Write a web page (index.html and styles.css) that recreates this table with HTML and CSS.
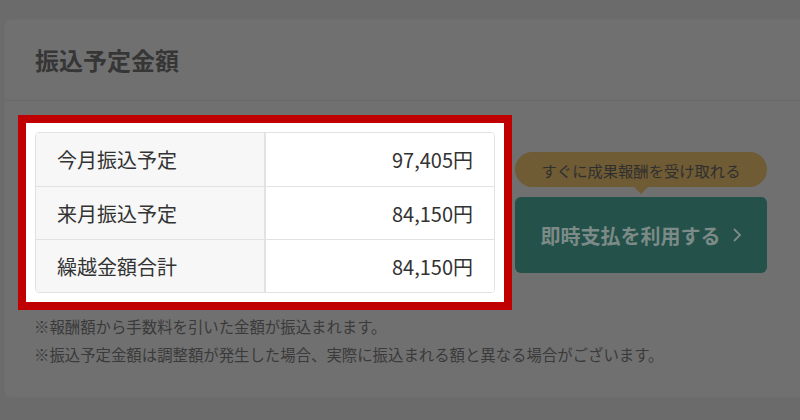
FILE: index.html
```html
<!DOCTYPE html>
<html lang="ja">
<head>
<meta charset="utf-8">
<link rel="stylesheet" href="styles.css">
</head>
<body>
<div class="card">
  <div class="card-head"><h2 class="title">振込予定金額</h2></div>
  <div class="card-body">
    <div class="row">
      <div class="highlight">
        <table class="amounts">
          <tr><th>今月振込予定</th><td>97,405円</td></tr>
          <tr><th>来月振込予定</th><td>84,150円</td></tr>
          <tr><th>繰越金額合計</th><td>84,150円</td></tr>
        </table>
      </div>
      <div class="action">
        <div class="bubble">すぐに成果報酬を受け取れる</div>
        <div class="btn">即時支払を利用する<svg class="chev" width="10" height="16" viewBox="0 0 10 16"><path d="M2 2 L8 8 L2 14" fill="none" stroke="currentColor" stroke-width="1.8"/></svg></div>
      </div>
    </div>
    <p class="note">※報酬額から手数料を引いた金額が振込まれます。</p>
    <p class="note">※振込予定金額は調整額が発生した場合、実際に振込まれる額と異なる場合がございます。</p>
  </div>
</div>
</body>
</html>
```
FILE: styles.css
```css
html, body { margin: 0; padding: 0; }
body {
  background: #6b6b6b;
  font-family: "Noto Sans CJK JP", "Noto Sans", sans-serif;
  width: 800px;
  height: 420px;
  overflow: hidden;
}
.card {
  margin: 19px 0 0 4px;
  width: 830px;
  height: 379px;
  background: #707070;
  border: 1px solid #6d6d6d;
  border-radius: 6px;
  box-sizing: border-box;
}
.card-head {
  height: 81px;
  border-bottom: 1px solid #686868;
  box-sizing: border-box;
  padding: 0 0 0 30px;
  display: flex;
  align-items: center;
}
.title {
  margin: 0;
  font-size: 24px;
  font-weight: 700;
  color: #363636;
  line-height: 1;
}
.card-body { padding: 14px 0 0 13px; }
.row { display: flex; align-items: center; }
.highlight {
  width: 494px;
  box-sizing: border-box;
  border: 8px solid #c00000;
  background: #fff;
  padding: 9px;
}
.amounts {
  width: 100%;
  border-collapse: separate;
  border-spacing: 0;
  border: 1px solid #e2e2e2;
  border-radius: 4px;
  overflow: hidden;
  font-size: 20px;
  color: #333;
}
.amounts th, .amounts td {
  height: 53px;
  padding: 0 21px;
  box-sizing: border-box;
  font-weight: 400;
  border-top: 1px solid #e2e2e2;
}
.amounts tr:first-child th, .amounts tr:first-child td { border-top: 0; height: 53px; }
.amounts th {
  width: 230px;
  text-align: left;
  background: #f7f7f7;
  border-right: 2px solid #e2e2e2;
}
.amounts td { text-align: right; background: #fff; }
.action {
  margin-left: 3px;
  width: 252px;
  display: flex;
  flex-direction: column;
}
.bubble {
  position: relative;
  height: 35px;
  border-radius: 18px;
  background: #6f5b34;
  color: #2f2f2f;
  font-size: 15.3px;
  display: flex;
  align-items: center;
  justify-content: center;
  margin-bottom: 10px;
}
.bubble::after {
  content: "";
  position: absolute;
  left: 50%;
  bottom: -7px;
  margin-left: -7px;
  border-left: 7px solid transparent;
  border-right: 7px solid transparent;
  border-top: 7px solid #6f5b34;
}
.btn {
  height: 76px;
  border-radius: 6px;
  background: #24514a;
  color: #7c8b87;
  font-size: 20px;
  font-weight: 700;
  display: flex;
  align-items: center;
  justify-content: center;
  gap: 11px;
}
.chev { display: block; }
.note {
  margin: 0;
  padding-left: 16px;
  font-size: 15.4px;
  line-height: 28px;
  color: #3a3a3a;
}
.note:first-of-type { margin-top: 2px; }
```
